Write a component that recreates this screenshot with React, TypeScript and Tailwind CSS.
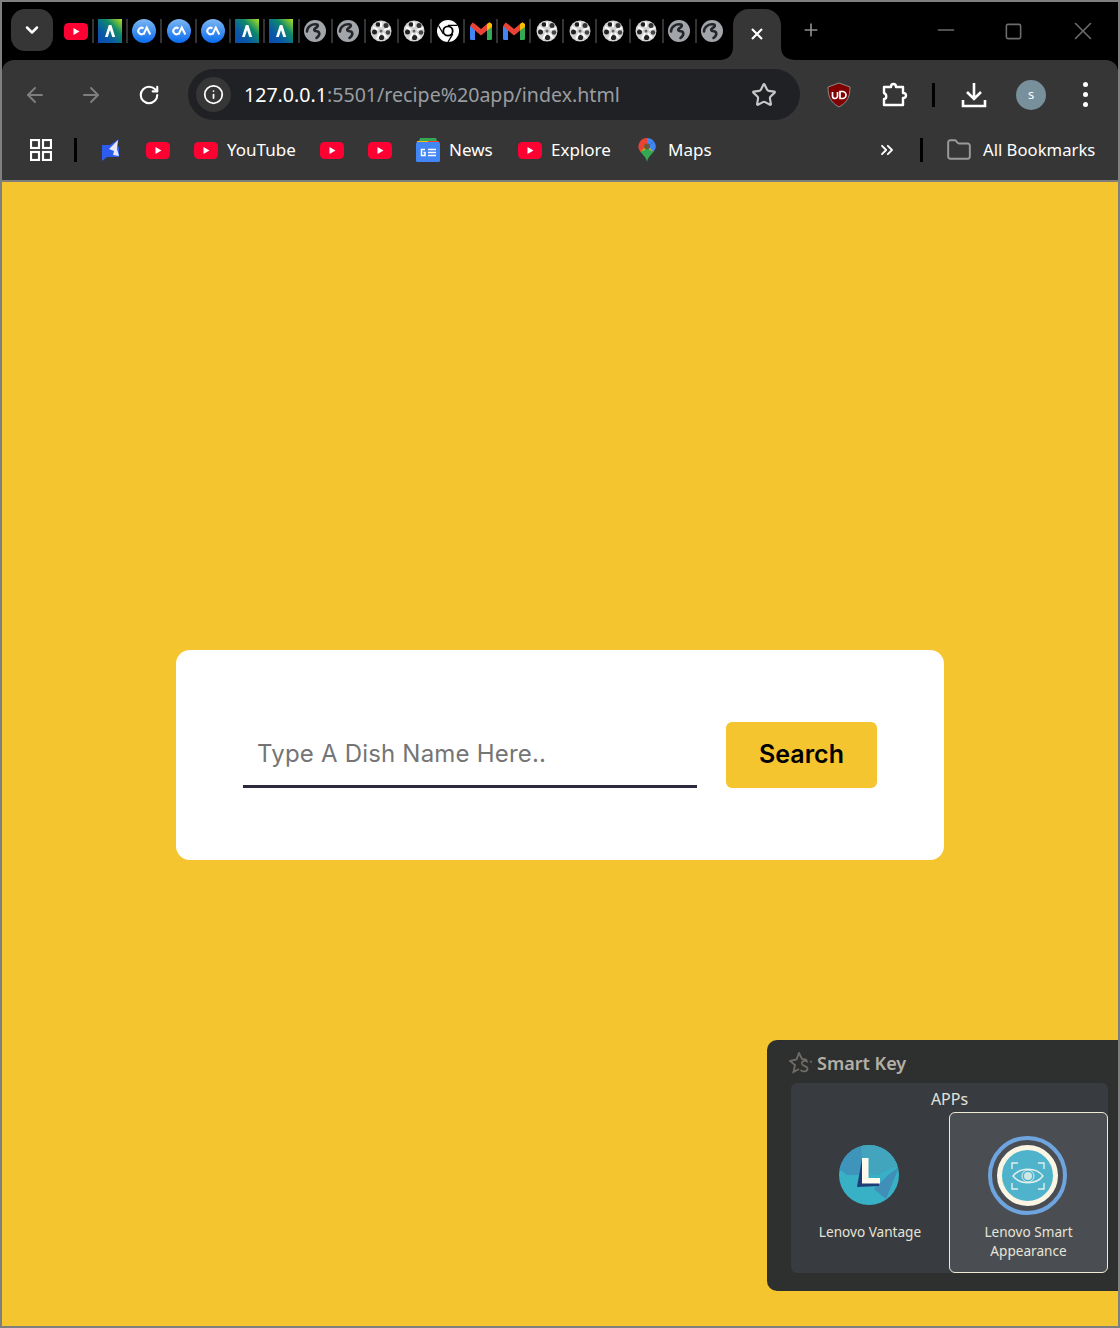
import { ArrowLeft, ArrowRight, ChevronDown, ChevronsRight, Folder, Info, Minus, Plus, RotateCw, Square, Star, X } from "lucide-react";

const ui = "font-['Noto_Sans',sans-serif]";

function Yt({ className = "" }: { className?: string }) {
  return (
    <svg width="24" height="17" viewBox="0 0 24 17" className={className}>
      <rect width="24" height="17" rx="4.5" fill="#ff0033" />
      <path d="M9.500 5v7l6-3.500z" fill="#fff" />
    </svg>
  );
}

function Arc() {
  return (
    <svg width="24" height="24" viewBox="0 0 24 24">
      <defs>
        <linearGradient id="arc" x1="1" y1="0" x2="0" y2="1">
          <stop offset="0" stopColor="#b6e01a" />
          <stop offset="0.35" stopColor="#0e8a6a" />
          <stop offset="0.7" stopColor="#0a58a8" />
          <stop offset="1" stopColor="#0a4cb0" />
        </linearGradient>
      </defs>
      <rect width="24" height="24" fill="url(#arc)" />
      <path d="M7 18 10.800 6h2.600L17.200 18h-2.900L12 11l-2.200 7z" fill="#fff" />
    </svg>
  );
}

function Ca() {
  return (
    <svg width="24" height="24" viewBox="0 0 24 24">
      <defs>
        <linearGradient id="ca" x1="0" y1="0" x2="0" y2="1">
          <stop offset="0" stopColor="#7cb6f2" />
          <stop offset="1" stopColor="#0a6cf0" />
        </linearGradient>
      </defs>
      <circle cx="12" cy="12" r="12" fill="url(#ca)" />
      <path d="M11.500 9.500a3.200 3.200 0 1 0 0 5M11.500 15.500 14.800 8.500 18.300 15.500" fill="none" stroke="#fff" strokeWidth="2" />
    </svg>
  );
}

function Globe() {
  return (
    <svg width="22" height="22" viewBox="0 0 22 22">
      <circle cx="11" cy="11" r="11" fill="#a2a6ab" />
      <path d="M3 11.500C3 7 7.500 3.500 13 4.500 15 5.500 13 7.500 11 8.500 9.500 9.500 10 11 12.500 11.200 16 11.500 16.500 15 12.500 18" fill="none" stroke="#24262a" strokeWidth="2.600" strokeLinecap="round" />
    </svg>
  );
}

function Reel() {
  return (
    <svg width="22" height="22" viewBox="0 0 22 22">
      <defs>
        <filter id="soft"><feGaussianBlur stdDeviation="0.45" /></filter>
      </defs>
      <g filter="url(#soft)">
        <circle cx="11" cy="11" r="10.500" fill="#d4d4d4" />
        <circle cx="8" cy="4.500" r="2.300" fill="#1c1c1c" />
        <circle cx="16" cy="5.500" r="2.500" fill="#333" />
        <circle cx="18" cy="12.500" r="2.300" fill="#444" />
        <circle cx="11.500" cy="17.500" r="2.600" fill="#222" />
        <circle cx="4.500" cy="12" r="2.500" fill="#222" />
        <path d="M11 2v5M3 7l5 3M20 8l-6 2M7 19l3-6M17 18l-4-5" stroke="#fff" strokeWidth="1.800" />
        <circle cx="11" cy="11" r="1.500" fill="#666" />
      </g>
    </svg>
  );
}

function ChromeMono() {
  return (
    <svg width="22" height="22" viewBox="0 0 22 22">
      <circle cx="11" cy="11" r="11" fill="#fff" />
      <circle cx="11" cy="11" r="5.600" fill="#000" />
      <circle cx="11" cy="11" r="3.800" fill="#fff" />
      <path d="M11 5.400h9.500M6.200 13.800 1.500 5.500M15.800 13.800 11 22" stroke="#000" strokeWidth="1.300" />
    </svg>
  );
}

function Gmail() {
  return (
    <svg width="22" height="18" viewBox="0 0 22 18">
      <path d="M0 4v12.500A1.500 1.500 0 0 0 1.500 18H5V7z" fill="#4285f4" />
      <path d="M22 4v12.500a1.500 1.500 0 0 1-1.500 1.500H17V7z" fill="#34a853" />
      <path d="M0 4 2.500.5 5 2l6 5 6-5 2.500-1.500L22 4l-5 4.500-6 5-6-5z" fill="#ea4335" />
      <path d="M17 2 19.500.3 22 2v3l-5 3.500z" fill="#fbbc04" />
    </svg>
  );
}

const tabs = [
  <Yt key="0" />, <Arc key="1" />, <Ca key="2" />, <Ca key="3" />, <Ca key="4" />, <Arc key="5" />, <Arc key="6" />,
  <Globe key="7" />, <Globe key="8" />, <Reel key="9" />, <Reel key="10" />, <ChromeMono key="11" />, <Gmail key="12" />, <Gmail key="13" />,
  <Reel key="14" />, <Reel key="15" />, <Reel key="16" />, <Reel key="17" />, <Globe key="18" />, <Globe key="19" />,
];

function TabStrip() {
  return (
    <div className="flex h-[58px] items-start">
      <div className="ml-[9px] mt-[7px] flex h-[42px] w-[42px] items-center justify-center rounded-[14px] bg-[#363636]">
        <ChevronDown size={20} strokeWidth={3} color="#fff" />
      </div>
      <div className="ml-[6.500px] mt-[17px] flex">
        {tabs.map((icon, i) => (
          <div
            key={i}
            className={
              "flex h-[24px] items-center justify-center border-r-2 " +
              (i < 7 ? "w-[34.300px] " : "w-[33.100px] ") +
              (i < 19 ? "border-[#333]" : "border-transparent")
            }
          >
            {icon}
          </div>
        ))}
      </div>
      <svg width="76" height="51" viewBox="0 0 76 51" className="ml-[-9.900px] mt-[7px] shrink-0">
        <path d="M0 51C8 51 13 46 13 38V16C13 7 20 0 29 0H45C54 0 61 7 61 16V38C61 46 66 51 76 51Z" fill="#363636" />
        <path d="M32 20l10 10M42 20 32 30" stroke="#fff" strokeWidth="2.200" />
      </svg>
      <Plus size={20} color="#8e8e8e" strokeWidth={2} className="ml-[5px] mt-[18px]" />
      <Minus size={26} color="#6c6c6c" strokeWidth={1.500} className="ml-[112.500px] mt-[15px]" />
      <Square size={19} color="#6c6c6c" strokeWidth={2} className="ml-[45px] mt-[19.500px]" />
      <X size={30} color="#6c6c6c" strokeWidth={1.300} className="ml-[44.500px] mt-[14px]" />
    </div>
  );
}

function Toolbar() {
  return (
    <div className="flex h-[60px] items-center pt-[9px]">
      <ArrowLeft size={24} color="#7e7e7e" strokeWidth={2} className="ml-[21px]" />
      <ArrowRight size={24} color="#7e7e7e" strokeWidth={2} className="ml-[32px]" />
      <RotateCw size={22} color="#fff" strokeWidth={2.300} className="ml-[35px]" />
      <div className="ml-[28px] flex h-[51px] w-[612px] items-center rounded-full bg-[#202124]">
        <div className="ml-[8px] flex h-[35px] w-[35px] items-center justify-center rounded-full bg-[#363636]">
          <Info size={21} color="#fff" strokeWidth={2} />
        </div>
        <div className={ui + " ml-[13px] w-[508px] whitespace-nowrap text-[19.600px] text-[#9a9da1]"}>
          <span className="text-white">127.0.0.1</span>:5501/recipe%20app/index.html
        </div>
        <Star size={26} color="#c7c7c7" strokeWidth={2} className="ml-[-1px]" />
      </div>
      <svg width="24" height="26" viewBox="0 0 24 26" className="ml-[27px]">
        <path d="M12 1 23 5c0 9-2 15-11 20C3 20 1 14 1 5z" fill="#800000" stroke="#8a8a8a" strokeWidth="1" />
        <path d="M5.500 10v4a2.500 2.500 0 0 0 5 0v-4M13 9.500v7h2.500a3.500 3.500 0 0 0 0-7z" fill="none" stroke="#fff" strokeWidth="1.700" />
      </svg>
      <svg width="26" height="26" viewBox="0 0 26 26" className="ml-[31px]" fill="none" stroke="#fff" strokeWidth="2.400" strokeLinejoin="round">
        <path d="M2 5h7c0-4 5-4 5 0h7v6c4 0 4 5 0 5v7H2v-6c3 0 3-5 0-6z" />
      </svg>
      <div className="ml-[24px] h-[24px] w-[3px] bg-black" />
      <svg width="26" height="26" viewBox="0 0 26 26" className="ml-[26px]" fill="none" stroke="#fff" strokeWidth="2.600">
        <path d="M13 1v15M6 10l7 7 7-7M2 18v6h22v-6" />
      </svg>
      <div className={"ml-[29px] flex h-[30px] w-[30px] items-center justify-center rounded-full bg-[#78909c] text-[13px] text-white " + ui}>s</div>
      <div className="ml-[37px] flex flex-col gap-[5px]">
        <div className="h-[5px] w-[5px] rounded-full bg-white" />
        <div className="h-[5px] w-[5px] rounded-full bg-white" />
        <div className="h-[5px] w-[5px] rounded-full bg-white" />
      </div>
    </div>
  );
}

function Bookmarks() {
  return (
    <div className={ui + " flex h-[62px] items-center border-b-2 border-[#7f7f7f]"}>
      <svg width="22" height="22" viewBox="0 0 22 22" className="ml-[28px]" fill="none" stroke="#fff" strokeWidth="2.200">
        <rect x="1" y="1" width="8" height="8" />
        <rect x="13" y="1" width="8" height="8" />
        <rect x="1" y="13" width="8" height="8" />
        <rect x="13" y="13" width="8" height="8" />
      </svg>
      <div className="ml-[22px] h-[24px] w-[3px] bg-black" />
      <svg width="18" height="23" viewBox="0 0 18 23" className="ml-[25px]">
        <path d="M0 6h8L17 0l-3 7 3 1v10H5l-5 4z" fill="#2f5cf0" />
        <path d="M16 1 7 10l5 2-1 4 6 1-2-7z" fill="#e8e8f8" />
      </svg>
      <Yt className="ml-[26px]" />
      <Yt className="ml-[24px]" />
      <span className="ml-[9px] w-[69px] text-[17px] leading-[22px] text-white whitespace-nowrap">YouTube</span>
      <Yt className="ml-[24px]" />
      <Yt className="ml-[24px]" />
      <svg width="24" height="24" viewBox="0 0 24 24" className="ml-[24px]">
        <path d="M3 3 4 0h16l1 3z" fill="#34a853" />
        <path d="M1 3h11v4H1z" fill="#fbbc04" />
        <path d="M12 3h11v4H12z" fill="#ea4335" />
        <rect y="4" width="24" height="20" rx="1.500" fill="#4285f4" />
        <path d="M9 11.500H5.500v6H9v-3H7.500M12 11.500h8M12 14.500h8M12 17.500h8" fill="none" stroke="#fff" strokeWidth="1.500" />
      </svg>
      <span className="ml-[9px] w-[44px] text-[17px] leading-[22px] text-white whitespace-nowrap">News</span>
      <Yt className="ml-[25px]" />
      <span className="ml-[9px] w-[59px] text-[17px] leading-[22px] text-white whitespace-nowrap">Explore</span>
      <svg width="18" height="24" viewBox="0 0 18 24" className="ml-[28px]">
        <path d="M9 0a8.500 8.500 0 0 0-6.500 14L9 7z" fill="#ea4335" />
        <path d="M9 0c3 0 5.500 1.500 7 3.500L9 9z" fill="#4285f4" />
        <path d="M16 3.500A8.500 8.500 0 0 1 15.500 14L9 9z" fill="#4285f4" />
        <path d="M2.500 14 9 7l6.500 7L9 12z" fill="#fbbc04" />
        <path d="M2.500 14C5 17 8 19 9 24c1-5 4-7 6.500-10L9 10z" fill="#34a853" />
        <circle cx="9" cy="8.500" r="3" fill="#6b5a3a" />
      </svg>
      <span className="ml-[12px] w-[44px] text-[17px] leading-[22px] text-white whitespace-nowrap">Maps</span>
      <ChevronsRight size={20} color="#fff" strokeWidth={2.200} className="ml-[165px]" />
      <div className="ml-[23px] h-[24px] w-[3px] bg-black" />
      <Folder size={26} color="#9a9a9a" strokeWidth={1.800} className="ml-[23px]" />
      <span className="ml-[11px] text-[16.700px] leading-[22px] text-white whitespace-nowrap">All Bookmarks</span>
    </div>
  );
}

function SearchCard() {
  return (
    <div className="flex h-[210px] w-[768px] items-center gap-[29px] rounded-[14px] bg-white pl-[67px]">
      <input
        placeholder="Type A Dish Name Here.."
        className="h-[66px] w-[454px] border-b-[3px] border-[#2a2a3c] pl-[14px] font-['Inter',sans-serif] text-[24px] tracking-[0.2px] text-black outline-none placeholder:text-[#757575]"
      />
      <button className="h-[66px] w-[151px] rounded-[6px] bg-[#f5c530] font-['Inter',sans-serif] text-[25px] font-semibold text-black">
        Search
      </button>
    </div>
  );
}

function SmartKey() {
  return (
    <div className={ui + " absolute bottom-[35px] right-0 h-[251px] w-[351px] rounded-l-[10px] bg-[#2e3030]"}>
      <div className="flex h-[43px] items-center pl-[22px] pt-[4px]">
        <svg width="24" height="24" viewBox="0 0 24 24" fill="none" stroke="#6f6c66" strokeWidth="1.800">
          <path d="M18 8 13 7 10 1 7.500 7.500 1 9l5 4-1.500 7 5.500-3" />
          <path d="M19 10c-3-2-7-1-6 2 1 2.500 6 2 5.500 5-.5 3-5.500 3-7 1" />
          <path d="M21.500 10.500l1-1.500" />
        </svg>
        <span className="ml-[4px] text-[18px] font-semibold text-[#b3afa5]">Smart Key</span>
      </div>
      <div className="ml-[24px] h-[190px] w-[317px] rounded-[6px] bg-[#383b40]">
        <div className="h-[29px] pt-[2px] text-center text-[16px] leading-[28px] text-[#e2e2dc]">APPs</div>
        <div className="grid h-[161px] grid-cols-[158px_159px]">
          <div className="flex flex-col items-center pt-[33px]">
            <svg width="60" height="60" viewBox="0 0 60 60" className="mr-[2px]">
              <defs>
                <clipPath id="lv"><circle cx="30" cy="30" r="30" /></clipPath>
              </defs>
              <g clipPath="url(#lv)">
                <rect width="60" height="60" fill="#38b0c6" />
                <path d="M0 24 22 0H0z" fill="#3f93bb" />
                <path d="M0 24 22 0 24 30 8 30z" fill="#3e94ba" />
                <path d="M22 0h38v20L38 30H24z" fill="#42a4bd" />
                <path d="M60 22 47 54l-12-10 14-14z" fill="#3f8fb8" />
              </g>
              <path d="M23 14 18 42 40 41V38H23z" fill="#1c3d78" />
              <path d="M23 13h6.500v20H41v5.500H23z" fill="#fdf9ec" />
            </svg>
            <div className="mt-[17px] text-[13.600px] leading-[19px] text-[#e6e4d8]">Lenovo Vantage</div>
          </div>
          <div className="flex flex-col items-center rounded-[6px] border border-[#efe9d6] bg-[#4a4e53] pt-[23px]">
            <div className="mr-[2px] flex h-[79px] w-[79px] items-center justify-center rounded-full border-[4px] border-[#6fa5de]">
              <div className="flex h-[61px] w-[61px] items-center justify-center rounded-full border-[5px] border-[#fbf6e4] bg-[#4fb3cc]">
                <svg width="34" height="28" viewBox="0 0 34 28" fill="none" stroke="#e2f0ea" strokeWidth="1.400">
                  <path d="M1 7V1h6M27 1h6v6M1 21v6h6M27 27h6v-6" />
                  <path d="M2 14C9 5 25 5 32 14 25 23 9 23 2 14z" />
                  <circle cx="17" cy="14" r="6" strokeWidth="1" />
                  <circle cx="17" cy="14" r="4" fill="#cfe6e6" stroke="none" />
                </svg>
              </div>
            </div>
            <div className="mt-[7px] text-center text-[13.600px] leading-[19px] text-[#e6e4d8]">
              Lenovo Smart
              <br />
              Appearance
            </div>
          </div>
        </div>
      </div>
    </div>
  );
}

export default function App() {
  return (
    <div className="flex h-[1328px] w-[1120px] flex-col overflow-hidden border-2 border-[#7f7f7f] bg-black">
      <TabStrip />
      <div className="rounded-t-[12px] bg-[#363636]">
        <Toolbar />
        <Bookmarks />
      </div>
      <main className="relative flex flex-1 items-center justify-center bg-[#f5c530] pt-[2px]">
        <SearchCard />
        <SmartKey />
      </main>
    </div>
  );
}
